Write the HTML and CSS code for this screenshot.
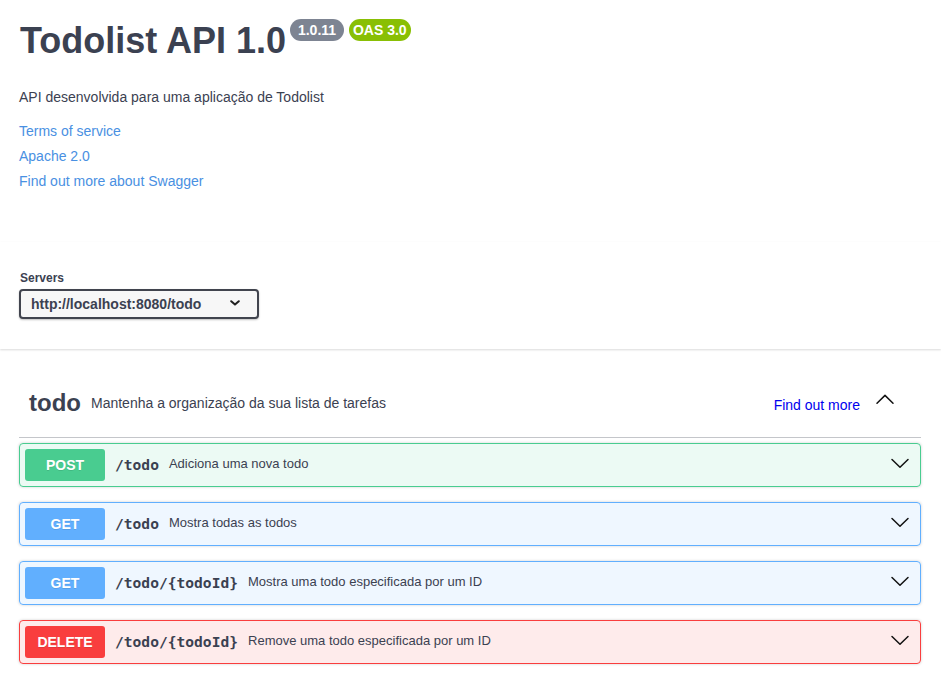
FILE: index.html
```html
<!DOCTYPE html>
<html lang="pt">
<head>
<meta charset="utf-8">
<title>Todolist API 1.0</title>
<link rel="stylesheet" href="styles.css">
</head>
<body>
<div class="wrapper info">
  <h1 class="title"><span class="title-text">Todolist API 1.0</span><small class="badge badge-version"><pre class="version"> 1.0.11 </pre></small><small class="badge badge-oas"><pre class="version">OAS 3.0</pre></small></h1>
  <p class="description">API desenvolvida para uma aplicação de Todolist</p>
  <div class="links">
    <a class="info-link" href="#">Terms of service</a>
    <a class="info-link" href="#">Apache 2.0</a>
    <a class="info-link" href="#">Find out more about Swagger</a>
  </div>
</div>

<section class="scheme-container">
  <div class="wrapper">
    <div class="servers-title">Servers</div>
    <div class="server-select">
      <span>http://localhost:8080/todo</span>
      <svg class="select-arrow" width="10" height="6" viewBox="0 0 10 6"><polyline points="1.2,1.2 5,4.6 8.8,1.2" fill="none" stroke="#202020" stroke-width="2" stroke-linecap="round" stroke-linejoin="round"/></svg>
    </div>
  </div>
</section>

<div class="wrapper">
  <section class="tag-section">
    <h3 class="tag-heading">
      <span class="tag-name">todo</span>
      <small class="tag-desc">Mantenha a organização da sua lista de tarefas</small>
      <span class="tag-spacer"></span>
      <a class="tag-docs" href="#">Find out more</a>
      <svg class="tag-arrow" width="20" height="20" viewBox="0 0 20 20"><polyline points="2,12.2 10,4.4 18,12.2" fill="none" stroke="#111" stroke-width="1.5" stroke-linecap="round" stroke-linejoin="round"/></svg>
    </h3>

    <div class="opblock opblock-post">
      <div class="summary">
        <span class="method">POST</span>
        <span class="path">/todo</span>
        <span class="summary-desc">Adiciona uma nova todo</span>
        <svg class="op-arrow" width="20" height="20" viewBox="0 0 20 20"><polyline points="2,4.5 10,12.3 18,4.5" fill="none" stroke="#111" stroke-width="1.5" stroke-linecap="round" stroke-linejoin="round"/></svg>
      </div>
    </div>

    <div class="opblock opblock-get">
      <div class="summary">
        <span class="method">GET</span>
        <span class="path">/todo</span>
        <span class="summary-desc">Mostra todas as todos</span>
        <svg class="op-arrow" width="20" height="20" viewBox="0 0 20 20"><polyline points="2,4.5 10,12.3 18,4.5" fill="none" stroke="#111" stroke-width="1.5" stroke-linecap="round" stroke-linejoin="round"/></svg>
      </div>
    </div>

    <div class="opblock opblock-get">
      <div class="summary">
        <span class="method">GET</span>
        <span class="path">/todo/{todoId}</span>
        <span class="summary-desc">Mostra uma todo especificada por um ID</span>
        <svg class="op-arrow" width="20" height="20" viewBox="0 0 20 20"><polyline points="2,4.5 10,12.3 18,4.5" fill="none" stroke="#111" stroke-width="1.5" stroke-linecap="round" stroke-linejoin="round"/></svg>
      </div>
    </div>

    <div class="opblock opblock-delete">
      <div class="summary">
        <span class="method">DELETE</span>
        <span class="path">/todo/{todoId}</span>
        <span class="summary-desc">Remove uma todo especificada por um ID</span>
        <svg class="op-arrow" width="20" height="20" viewBox="0 0 20 20"><polyline points="2,4.5 10,12.3 18,4.5" fill="none" stroke="#111" stroke-width="1.5" stroke-linecap="round" stroke-linejoin="round"/></svg>
      </div>
    </div>
  </section>
</div>
</body>
</html>
```

FILE: styles.css
```css
* { box-sizing: border-box; }

html, body {
  margin: 0;
  padding: 0;
  background: #fff;
  color: #3b4151;
  font-family: "Liberation Sans", Arial, sans-serif;
}

.wrapper {
  padding: 0 20px 0 19px;
}

/* info */
.info {
  padding-top: 20px;
  margin-bottom: 48px;
}

.title {
  display: flex;
  align-items: flex-start;
  margin: 0;
  font-size: 36px;
  line-height: 41px;
  font-weight: 700;
  color: #3b4151;
}

.title-text {
  padding-left: 1px;
}

.badge {
  display: inline-block;
  margin: -1px 0 0 4px;
  padding: 3px 4px;
  border-radius: 57px;
  line-height: 16px;
}

.badge-oas {
  margin-left: 5px;
  background: #89bf04;
}

.badge-version {
  background: #7d8492;
}

.version {
  margin: 0;
  padding: 0;
  font-family: "Liberation Sans", Arial, sans-serif;
  font-size: 14px;
  font-weight: 700;
  line-height: 16px;
  color: #fff;
}

.description {
  margin: 24px 0 0;
  font-size: 14px;
  line-height: 25px;
  color: #3b4151;
}

.links {
  display: flex;
  flex-direction: column;
  align-items: flex-start;
  margin-top: 9px;
}

.info-link {
  font-size: 14px;
  line-height: 25px;
  color: #4990e2;
  text-decoration: none;
}

/* servers */
.scheme-container {
  padding: 30px 0;
  background: #fff;
  box-shadow: 0 1px 2px 0 rgba(0, 0, 0, .15);
}

.servers-title {
  padding-left: 1px;
  font-size: 12px;
  line-height: 13px;
  font-weight: 700;
  color: #3b4151;
}

.server-select {
  display: flex;
  align-items: center;
  justify-content: space-between;
  width: 240px;
  height: 30px;
  margin-top: 4px;
  padding: 5px 17px 5px 10px;
  border: 2px solid #41444e;
  border-radius: 4px;
  background: #f7f7f7;
  box-shadow: 0 1px 2px 0 rgba(0, 0, 0, .25);
  font-size: 14px;
  line-height: 16px;
  font-weight: 700;
  color: #3b4151;
}

.select-arrow {
  margin-top: -2px;
}

/* tag */
.tag-section {
  margin-top: 20px;
}

.tag-heading {
  display: flex;
  align-items: center;
  height: 69px;
  margin: 0 0 5px;
  padding: 10px 26px 10px 10px;
  border-bottom: 1px solid rgba(59, 65, 81, .3);
  font-weight: 400;
}

.tag-name {
  font-size: 24px;
  font-weight: 700;
  line-height: 28px;
  color: #3b4151;
}

.tag-desc {
  padding: 0 10px;
  font-size: 14px;
  line-height: 16px;
  color: #3b4151;
}

.tag-spacer {
  flex: 1;
}

.tag-docs {
  margin-top: 4px;
  font-size: 14px;
  line-height: 16px;
  color: #0000ee;
  text-decoration: none;
}

.tag-arrow {
  margin-left: 15px;
  margin-top: -4px;
}

/* operations */
.opblock {
  margin: 0 0 15px;
  border: 1px solid #000;
  border-radius: 4px;
  box-shadow: 0 0 3px rgba(0, 0, 0, .19);
}

.summary {
  display: flex;
  align-items: center;
  padding: 5px;
}

.method {
  min-width: 80px;
  padding: 8px 0;
  border-radius: 3px;
  font-size: 14px;
  line-height: 16px;
  font-weight: 700;
  color: #fff;
  text-align: center;
  text-shadow: 0 1px 0 rgba(0, 0, 0, .1);
}

.path {
  padding: 0 10px 2px;
  font-family: "DejaVu Sans Mono", "Liberation Mono", monospace;
  font-size: 14.6px;
  font-weight: 700;
  color: #3b4151;
}

.summary-desc {
  flex: 1;
  padding-bottom: 3px;
  font-size: 13px;
  color: #3b4151;
}

.op-arrow {
  margin-right: 5px;
}

.opblock-post {
  border-color: #49cc90;
  background: rgba(73, 204, 144, .1);
}

.opblock-post .method {
  background: #49cc90;
}

.opblock-get {
  border-color: #61affe;
  background: rgba(97, 175, 254, .1);
}

.opblock-get .method {
  background: #61affe;
}

.opblock-delete {
  border-color: #f93e3e;
  background: rgba(249, 62, 62, .1);
}

.opblock-delete .method {
  background: #f93e3e;
}
```
